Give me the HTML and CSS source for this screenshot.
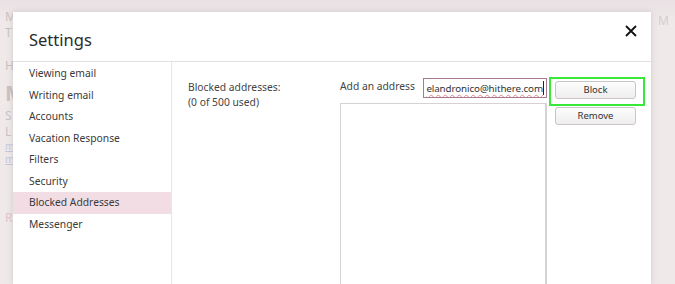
FILE: index.html
```html
<!DOCTYPE html>
<html lang="en">
<head>
    <meta charset="UTF-8">
    <title>Settings - Blocked Addresses</title>
    <link rel="stylesheet" href="styles.css">
</head>
<body>

<!-- Faded mail page behind the dialog -->
<div class="backdrop">
    <div class="bg-left">
        <div class="bg-line">M</div>
        <div class="bg-line">T</div>
        <div class="bg-line gap">H</div>
        <div class="bg-line big">M</div>
        <div class="bg-line">S</div>
        <div class="bg-line">L</div>
        <div class="bg-line link">m</div>
        <div class="bg-line link">m</div>
        <div class="bg-line red">R</div>
    </div>
    <div class="bg-right">M</div>
</div>

<div class="dialog">
    <div class="dialog-header">
        <div class="dialog-title">Settings</div>
        <div class="close">
            <svg width="12" height="12" viewBox="0 0 12 12">
                <path d="M1 1 L11 11 M11 1 L1 11" stroke="#111" stroke-width="1.8" fill="none"/>
            </svg>
        </div>
    </div>

    <div class="dialog-body">
        <!-- Left nav -->
        <div class="nav">
            <div class="nav-item">Viewing email</div>
            <div class="nav-item">Writing email</div>
            <div class="nav-item">Accounts</div>
            <div class="nav-item">Vacation Response</div>
            <div class="nav-item">Filters</div>
            <div class="nav-item">Security</div>
            <div class="nav-item active">Blocked Addresses</div>
            <div class="nav-item">Messenger</div>
        </div>

        <!-- Blocked addresses panel -->
        <div class="panel">
            <div class="summary">
                <div>Blocked addresses:</div>
                <div>(0 of 500 used)</div>
            </div>
            <div class="address-col">
                <div class="add-row">
                    <span class="add-label">Add an address</span>
                    <div class="address-input"><span class="typed">elandronico@hithere.com</span><span class="caret"></span></div>
                </div>
                <div class="address-list"></div>
            </div>
            <div class="buttons">
                <div class="highlight">
                    <div class="btn">Block</div>
                </div>
                <div class="btn">Remove</div>
            </div>
        </div>
    </div>
</div>

</body>
</html>
```

FILE: styles.css
```css
/* Basic Reset */
* {
    margin: 0;
    padding: 0;
    box-sizing: border-box;
}
body {
    font-family: "Noto Sans", "Open Sans", sans-serif;
    background: #ede6e7;
    color: #333;
    width: 675px;
    height: 284px;
    overflow: hidden;
    position: relative;
}
/* Faded page behind */
.backdrop {
    height: 100%;
    background: linear-gradient(#e9e1e3, #efe9ea 20px, #efe9ea);
}
.bg-left {
    width: 13px;
    overflow: hidden;
    padding: 9px 0 0 5px;
    color: #c9c3c5;
    font-size: 12px;
    line-height: 16px;
}
.bg-line.gap {
    margin-top: 17px;
}
.bg-line.big {
    font-size: 21px;
    font-weight: bold;
    line-height: 30px;
    margin-top: 4px;
}
.bg-line.link {
    color: #c2c8dc;
    text-decoration: underline;
    font-size: 10px;
    line-height: 13px;
}
.bg-line.red {
    color: #e2c5cc;
    margin-top: 44px;
}
.bg-right {
    position: absolute;
    left: 658px;
    top: 12px;
    color: #d4ced0;
    font-size: 12px;
}
/* Dialog */
.dialog {
    position: absolute;
    left: 13px;
    top: 12px;
    width: 638px;
    height: 272px;
    overflow: hidden;
    background: #fff;
    box-shadow: 0 0 6px rgba(120, 100, 105, 0.25);
}
.dialog-header {
    height: 50px;
    border-bottom: 1px solid #e6dfe1;
    display: flex;
    align-items: center;
    justify-content: space-between;
    padding: 0 14px 0 16px;
}
.dialog-title {
    font-size: 16.5px;
    color: #2b2b2b;
    margin-top: 6px;
}
.close {
    display: flex;
    margin-top: -12px;
}
.dialog-body {
    display: flex;
    height: 222px;
}
/* Nav */
.nav {
    width: 159px;
    padding-top: 1px;
    border-right: 1px solid #e9e4e5;
}
.nav-item {
    height: 21.5px;
    line-height: 21.5px;
    padding-left: 16px;
    font-size: 10.3px;
    color: #3a3a3a;
}
.nav-item.active {
    background: #f2dde4;
}
/* Panel */
.panel {
    display: flex;
    padding: 16px 0 0 16px;
    font-size: 10.3px;
    color: #444;
}
.summary {
    width: 152px;
    line-height: 15px;
    padding-top: 2px;
}
.address-col {
    width: 207px;
}
.add-row {
    display: flex;
    align-items: center;
    justify-content: space-between;
}
.add-label {
    margin-top: -5px;
}
.address-input {
    width: 124px;
    height: 20px;
    border: 1px solid #a9798f;
    display: flex;
    align-items: center;
    justify-content: flex-end;
    padding-right: 2px;
    font-size: 9.8px;
    letter-spacing: -0.1px;
    color: #333;
    overflow: hidden;
    white-space: nowrap;
}
.typed {
    text-decoration: underline wavy #e08a8a;
    text-decoration-thickness: 1px;
    text-underline-offset: 2px;
}
.caret {
    flex: none;
    width: 1px;
    height: 14px;
    background: #222;
}
.address-list {
    margin-top: 5px;
    height: 200px;
    border: 1px solid #d6d2d3;
    border-right-width: 2px;
}
/* Buttons */
.buttons {
    margin-left: 2px;
    width: 96px;
}
.highlight {
    border: 2px solid #3ae83a;
    height: 29px;
    padding: 2px 0 0 4px;
    margin-top: -1px;
}
.btn {
    width: 81px;
    height: 18px;
    border: 1px solid #c9c4c6;
    border-radius: 3px;
    background: linear-gradient(#fdfdfd, #efeded);
    font-size: 9.5px;
    color: #333;
    text-align: center;
    line-height: 16px;
}
.buttons > .btn {
    margin: 1px 0 0 6px;
}
```
